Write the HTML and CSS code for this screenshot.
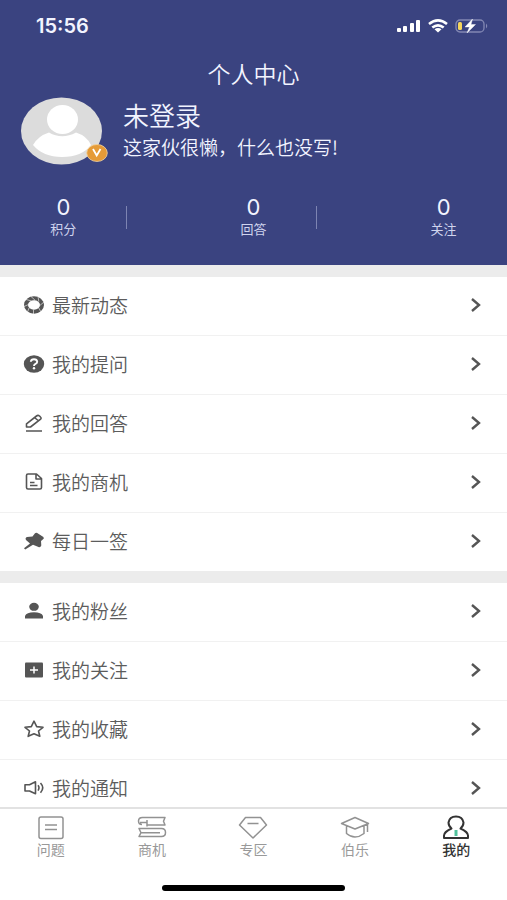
FILE: index.html
```html
<!DOCTYPE html>
<html lang="zh-CN">
<head>
<meta charset="utf-8">
<meta name="viewport" content="width=device-width, initial-scale=1">
<title>个人中心</title>
<link rel="stylesheet" href="styles.css">
</head>
<body>
<div class="app">
  <header class="profile">
    <div class="status">
      <span class="time">15:56</span>
      <div class="status-icons">
        <svg width="24" height="14" viewBox="0 0 24 14" fill="#fff"><rect x="0" y="9" width="4" height="4" rx="1"/><rect x="6" y="7" width="4" height="6" rx="1"/><rect x="13" y="4" width="4" height="9" rx="1"/><rect x="19" y="1" width="4" height="12" rx="1"/></svg>
        <svg width="20" height="14" viewBox="0 0 20 14" fill="none" stroke="#fff" stroke-width="2.600"><path d="M1 5Q10-2.200 19 5M4.300 8.600Q10 4 15.700 8.600"/><path d="M6.500 10.300Q10 7.800 13.500 10.300L10 13.500z" fill="#fff" stroke="none"/></svg>
        <svg width="34" height="14" viewBox="0 0 34 14" fill="none"><rect x="1" y="1" width="28" height="12" rx="4" stroke="#8388b3" stroke-width="1.300"/><path d="M31 4.500Q33.500 7 31 9.500z" fill="#8388b3"/><rect x="3" y="3" width="4" height="8" rx="1.500" fill="#f5d55c"/><path d="M17.500 0L10 8h4.500L12 14l8.500-8.500H16z" fill="#fff" stroke="#fff" stroke-width=".4"/></svg>
      </div>
    </div>
    <h1 class="title">个人中心</h1>
    <div class="user">
      <div class="avatar">
        <svg width="81" height="68" viewBox="0 0 81 68"><ellipse cx="40.500" cy="34" rx="40.500" ry="33.500" fill="#dcdcdc"/><ellipse cx="41.500" cy="22.500" rx="15.500" ry="14.500" fill="#fff"/><path d="M12 48Q17 39 28 35.500Q41 43 55 35.500Q66 39 70 48Q61 60 41 60Q22 60 12 48z" fill="#fff"/></svg>
        <svg class="badge" width="22" height="18" viewBox="0 0 22 18"><ellipse cx="11" cy="9" rx="10.300" ry="8.500" fill="#e59b38" stroke="#f3d3a0" stroke-width=".8"/><path d="M7 5L10.700 11.500L14.500 5" fill="none" stroke="#fff" stroke-width="1.800"/></svg>
      </div>
      <div class="who">
        <h2 class="name">未登录</h2>
        <p class="bio">这家伙很懒，什么也没写!</p>
      </div>
    </div>
    <div class="stats">
      <div class="stat"><strong>0</strong><span>积分</span></div>
      <div class="stat"><strong>0</strong><span>回答</span></div>
      <div class="stat"><strong>0</strong><span>关注</span></div>
    </div>
  </header>

  <main class="menus">
    <nav class="menu">
      <a class="row" href="#news">
        <svg class="icon" viewBox="0 0 22 20"><ellipse cx="11" cy="10" rx="8" ry="6.700" fill="none" stroke="#555" stroke-width="4"/><path d="M7.500 1L12 5.200M15 1.500L15.800 6.500M21 7L16.800 10.500M18 17L15.500 12.500M10.500 19L10.500 14.800M4.500 17L6 13M1 11.500L5.500 9.500M3 4.500L8 5.800" stroke="#fff" stroke-width=".6"/></svg>
        <span>最新动态</span><svg class="arrow" viewBox="0 0 12 18"><path d="M2 3l7 6-7 6"/></svg>
      </a>
      <a class="row" href="#questions">
        <svg class="icon" viewBox="0 0 22 20"><ellipse cx="11" cy="10" rx="10.200" ry="8.700" fill="#555"/><path d="M7.800 7.800Q8 5.200 11 5.200T14.200 7.700Q14.200 9 12.500 9.800Q11 10.500 11 12" fill="none" stroke="#fff" stroke-width="1.900"/><circle cx="11" cy="14.300" r="1.200" fill="#fff"/></svg>
        <span>我的提问</span><svg class="arrow" viewBox="0 0 12 18"><path d="M2 3l7 6-7 6"/></svg>
      </a>
      <a class="row" href="#answers">
        <svg class="icon line" viewBox="0 0 22 20"><path d="M3.500 14v-3.200L13.500 3Q15 1.800 16.500 3L17.500 4Q18.800 5.200 17.300 6.400L7.500 14zM11.500 4.500l4.200 3.500M3 18h16"/></svg>
        <span>我的回答</span><svg class="arrow" viewBox="0 0 12 18"><path d="M2 3l7 6-7 6"/></svg>
      </a>
      <a class="row" href="#business">
        <svg class="icon line" viewBox="0 0 22 20"><path d="M5 2h8.500l5 4.500v9q0 1.500-1.500 1.500H5q-1.500 0-1.500-1.500v-12Q3.500 2 5 2zM13 2.500V7h5M7 10.500h4.500M7 13.500h7.500"/></svg>
        <span>我的商机</span><svg class="arrow" viewBox="0 0 12 18"><path d="M2 3l7 6-7 6"/></svg>
      </a>
      <a class="row" href="#daily">
        <svg class="icon" viewBox="0 0 22 20"><path d="M12 2.300Q13 1.200 14.200 2L20.400 6Q21.600 7.500 19.800 8.600L18 10L18.300 14.500Q17.500 16.700 15.500 16L10 13.800L2.200 18.500L1 17.300L7 12.500L3 9Q1.800 6.800 4 6L9.500 5.400z" fill="#555"/></svg>
        <span>每日一签</span><svg class="arrow" viewBox="0 0 12 18"><path d="M2 3l7 6-7 6"/></svg>
      </a>
    </nav>
    <nav class="menu">
      <a class="row" href="#fans">
        <svg class="icon" viewBox="0 0 22 20"><ellipse cx="11" cy="5.800" rx="4.800" ry="4" fill="#555"/><path d="M2 17.500V15Q3.500 11.300 11 11.300T20 15v2.500z" fill="#555"/></svg>
        <span>我的粉丝</span><svg class="arrow" viewBox="0 0 12 18"><path d="M2 3l7 6-7 6"/></svg>
      </a>
      <a class="row" href="#following">
        <svg class="icon" viewBox="0 0 22 20"><rect x="2" y="2.500" width="18" height="15" rx="1" fill="#555"/><path d="M7 10h8M11 6.500v7" stroke="#fff" stroke-width="1.500"/></svg>
        <span>我的关注</span><svg class="arrow" viewBox="0 0 12 18"><path d="M2 3l7 6-7 6"/></svg>
      </a>
      <a class="row" href="#favorites">
        <svg class="icon line" viewBox="0 0 22 20"><path d="M11 2.200L13.700 7.600L20 8.300L15.500 12L16.800 17.300L11 14.700L5.200 17.300L6.500 12L2 8.300L8.300 7.600z"/></svg>
        <span>我的收藏</span><svg class="arrow" viewBox="0 0 12 18"><path d="M2 3l7 6-7 6"/></svg>
      </a>
      <a class="row" href="#notices">
        <svg class="icon line" viewBox="0 0 22 20"><path d="M2 6.800H6.500L12.500 3.800V15.800L6.500 13H2zM15 7.200Q17 9.800 15 12.600M17.500 5Q22 9.800 17.500 14.700"/></svg>
        <span>我的通知</span><svg class="arrow" viewBox="0 0 12 18"><path d="M2 3l7 6-7 6"/></svg>
      </a>
    </nav>
  </main>

  <footer class="bottom">
    <nav class="tabs">
      <a class="tab" href="#ask"><svg viewBox="0 0 30 26"><rect x="3" y="2" width="24" height="21.500" rx="2"/><path d="M9 10h12M9 14.500h12"/></svg><span>问题</span></a>
      <a class="tab" href="#market"><svg viewBox="0 0 30 26"><path d="M10 10H28L26.500 6.300L28 2.500H5.500Q1.500 2.500 1.500 6T5 9.500M3 7.500H10M10 5v6.500M2 13.500H24.500Q28.500 13.500 28.500 17.500T24.500 21.500H2L4 17.700zM4 17.700H23"/></svg><span>商机</span></a>
      <a class="tab" href="#zone"><svg viewBox="0 0 30 26"><path d="M7.500 2.500h15L28.500 10L15 23L1.500 10zM9.500 8.500h11"/></svg><span>专区</span></a>
      <a class="tab" href="#mentor"><svg viewBox="0 0 30 26"><path d="M1.500 8.500L15 2.500L28.500 8.500L15 14zM6.500 11v7.500Q10.500 22 15 22T24 18.500V11M27.500 9v8"/></svg><span>伯乐</span></a>
      <a class="tab active" href="#me" aria-current="page"><svg viewBox="0 0 30 26"><path d="M10.500 13.500Q7.500 11 7.500 7.500Q8.500 1.500 15 1.500T22.500 7.500Q22.500 11 19.500 13.500Q27 17 27 20.500V23H3V20.500Q3 17 10.500 13.500z"/><path class="tie" d="M15 15v6"/></svg><span>我的</span></a>
    </nav>
    <div class="home-bar"></div>
  </footer>
</div>
</body>
</html>
```

FILE: styles.css
```css
* {
  box-sizing: border-box;
}

body {
  margin: 0;
  background: #fff;
  color: #5c5c5c;
  font-family: "Noto Sans CJK SC", sans-serif;
}

h1, h2, p {
  margin: 0;
  font-weight: 350;
}

a {
  color: inherit;
  text-decoration: none;
}

svg {
  display: block;
  flex: none;
}

.app {
  display: flex;
  flex-direction: column;
  height: 100vh;
}

.profile {
  flex: none;
  padding-bottom: 26px;
  background: #3a4380;
  color: #f2f4ff;
}

.status {
  display: flex;
  align-items: center;
  justify-content: space-between;
  height: 52px;
  padding: 0 18px 0 36px;
}

.time {
  font: 600 20px/24px Inter, sans-serif;
}

.status-icons {
  display: flex;
  gap: 7px;
}

.title {
  font-size: 23px;
  line-height: 42px;
  text-align: center;
}

.user {
  display: flex;
  gap: 21px;
  padding: 3px 21px 0;
}

.avatar {
  position: relative;
  flex: none;
}

.badge {
  position: absolute;
  right: -6px;
  bottom: 3px;
}

.name {
  font-size: 26px;
  line-height: 36px;
}

.bio {
  font-size: 19px;
  line-height: 28px;
}

.stats {
  display: flex;
  justify-content: space-between;
  padding-top: 30px;
}

.stat {
  display: flex;
  flex-direction: column;
  align-items: center;
  position: relative;
  width: 25%;
}

.stat:not(:last-child)::after {
  content: "";
  position: absolute;
  top: 11px;
  right: 0;
  width: 1px;
  height: 23px;
  background: #7d84b2;
}

.stat strong {
  font: 400 22px/24px Inter, sans-serif;
}

.stat span {
  color: #d0d4ee;
  font-size: 13px;
  line-height: 20px;
}

.menus {
  flex: 1;
  min-height: 0;
  overflow: hidden;
  background: #ececec;
}

.menu {
  display: grid;
  gap: 1px;
  margin-top: 12px;
  background: #f1f1f1;
}

.row {
  display: flex;
  align-items: center;
  height: 58px;
  padding: 0 25px 2px 23px;
  background: #fff;
  font-size: 19px;
  font-weight: 350;
  line-height: 28px;
}

.row span {
  flex: 1;
}

.icon {
  width: 22px;
  height: 20px;
  margin-right: 7px;
}

.line {
  fill: none;
  stroke: #555;
  stroke-width: 1.6;
  stroke-linejoin: round;
}

.arrow {
  width: 12px;
  height: 18px;
  fill: none;
  stroke: #555;
  stroke-width: 2.4;
}

.bottom {
  flex: none;
  border-top: 2px solid #e2e2e2;
  background: #fff;
}

.tabs {
  display: grid;
  grid-template-columns: repeat(5, 1fr);
  padding-top: 6px;
}

.tab {
  display: flex;
  flex-direction: column;
  align-items: center;
  color: #999;
  font-size: 14px;
  line-height: 16px;
}

.tab svg {
  width: 30px;
  height: 26px;
  fill: none;
  stroke: #929292;
  stroke-width: 1.5;
  stroke-linejoin: round;
}

.active {
  color: #333;
  font-weight: 500;
}

.active svg {
  stroke: #333;
  stroke-width: 2;
}

.active .tie {
  stroke: #4fc19b;
  stroke-width: 3;
}

.home-bar {
  width: 36%;
  height: 6px;
  margin: 28px auto 9px;
  border-radius: 3px;
  background: #000;
}
```
